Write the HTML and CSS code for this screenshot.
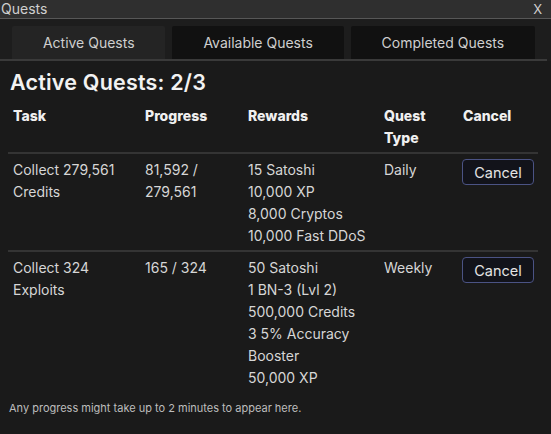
FILE: index.html
```html
<!DOCTYPE html>
<html>
<head>
<meta charset="utf-8">
<link rel="stylesheet" href="styles.css">
</head>
<body>
<div class="window">
  <div class="titlebar">
    <span class="title">Quests</span>
    <span class="close">X</span>
  </div>
  <div class="tabbar">
    <div class="tabs">
      <div class="tab active">Active Quests</div>
      <div class="tab">Available Quests</div>
      <div class="tab">Completed Quests</div>
    </div>
    <div class="tabline"></div>
  </div>
  <div class="content">
    <h1 class="heading">Active Quests: 2/3</h1>
    <table class="quests">
      <colgroup>
        <col class="c-task"><col class="c-progress"><col class="c-rewards"><col class="c-type"><col class="c-cancel">
      </colgroup>
      <thead>
        <tr><th>Task</th><th>Progress</th><th>Rewards</th><th>Quest Type</th><th>Cancel</th></tr>
      </thead>
      <tbody>
        <tr>
          <td>Collect 279,561 Credits</td>
          <td>81,592 / 279,561</td>
          <td>15 Satoshi<br>10,000 XP<br>8,000 Cryptos<br>10,000 Fast DDoS</td>
          <td>Daily</td>
          <td><button class="cancel">Cancel</button></td>
        </tr>
        <tr>
          <td>Collect 324 Exploits</td>
          <td>165 / 324</td>
          <td>50 Satoshi<br>1 BN-3 (Lvl 2)<br>500,000 Credits<br>3 5% Accuracy Booster<br>50,000 XP</td>
          <td>Weekly</td>
          <td><button class="cancel">Cancel</button></td>
        </tr>
      </tbody>
    </table>
    <p class="note">Any progress might take up to 2 minutes to appear here.</p>
  </div>
</div>
</body>
</html>
```

FILE: styles.css
```css
html, body {
  margin: 0;
  padding: 0;
  background: #1a1a1a;
}
body {
  font-family: Inter, "Open Sans", sans-serif;
  color: #d6d6d6;
}
.window {
  width: 551px;
  height: 434px;
  background: #1a1a1a;
  overflow: hidden;
}
.titlebar {
  height: 18px;
  background: #2f2f2f;
  border-bottom: 1px solid #575757;
  display: flex;
  justify-content: space-between;
  align-items: center;
  padding: 0 9px 0 1px;
  font-size: 14px;
  color: #cfcfcf;
  line-height: 18px;
}
.close {
  font-size: 13px;
}
.tabbar {
  background: #1d1d1d;
  padding-top: 7px;
}
.tabs {
  display: flex;
  gap: 7px;
  padding: 0 16px 0 12px;
}
.tab {
  flex: 1 1 auto;
  height: 33px;
  display: flex;
  align-items: center;
  justify-content: center;
  font-size: 14px;
  color: #cfcfcf;
  background: #111111;
  border-radius: 2px 2px 0 0;
}
.tab.active {
  background: #242424;
}
.tabline {
  height: 2px;
  background: #3a3a3a;
  margin-right: 4px;
}
.content {
  padding: 0 8px;
}
.heading {
  margin: 8px 0 0 2px;
  font-size: 21.5px;
  line-height: 26px;
  font-weight: 600;
  color: #f2f2f2;
  letter-spacing: 0.2px;
}
.quests {
  margin-top: 5px;
  width: 530px;
  border-collapse: collapse;
  table-layout: fixed;
  font-size: 14px;
  line-height: 22px;
}
.c-task { width: 132px; }
.c-progress { width: 103px; }
.c-rewards { width: 136px; }
.c-type { width: 79px; }
.c-cancel { width: 80px; }
.quests th {
  text-align: left;
  vertical-align: top;
  font-weight: 800;
  color: #f0f0f0;
  padding: 5px 5px 3px;
  border-bottom: 2px solid #343434;
}
.quests td {
  vertical-align: top;
  padding: 5px 5px 3px;
  color: #d6d6d6;
}
.quests tbody tr:first-child td {
  border-bottom: 2px solid #343434;
}
.cancel {
  display: block;
  width: 72px;
  height: 26px;
  margin: 0 0 0 -1px;
  padding: 0;
  background: #12131a;
  border: 1px solid #4b5384;
  border-radius: 4px;
  font-family: inherit;
  font-size: 14.5px;
  color: #e4e4e4;
}
.note {
  margin: 9px 0 0 1px;
  font-size: 11px;
  color: #bdbdbd;
}
```
